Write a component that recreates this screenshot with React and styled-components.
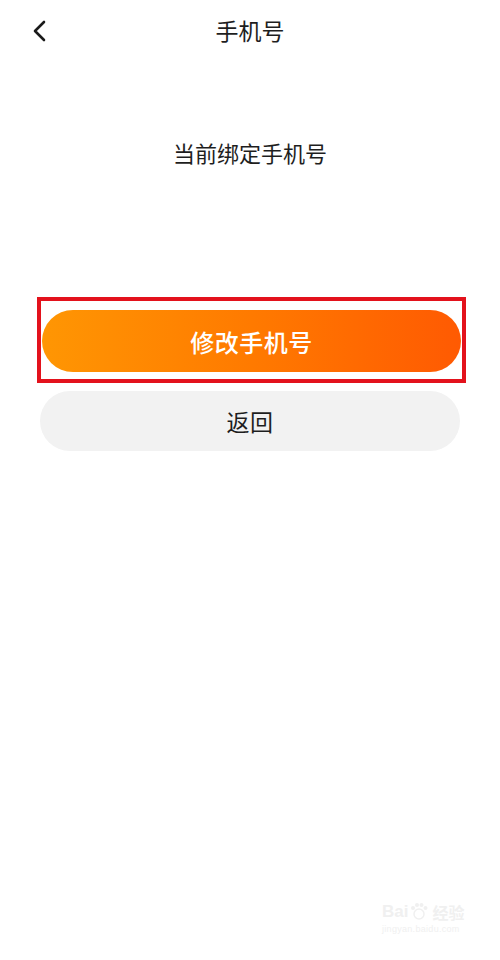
import React from 'react';
import styled, { createGlobalStyle } from 'styled-components';

const Global = createGlobalStyle`
  html, body {
    margin: 0;
    padding: 0;
    background: #fff;
  }
  body {
    font-family: "Noto Sans CJK SC", "Noto Sans", sans-serif;
    color: #1a1a1a;
  }
`

const Page = styled.div`
  position: relative;
  width: 500px;
  height: 960px;
  background: #fff;
  overflow: hidden;
`

const Header = styled.div`
  // 상단바
  position: relative;
  display: flex;
  align-items: center;
  justify-content: center;
  height: 60px;
  padding-bottom: 2px;
`

const Back = styled.div`
  position: absolute;
  left: 31px;
  top: 20px;
  width: 18px;
  height: 22px;
  display: flex;
  align-items: center;
  justify-content: center;
`

const Title = styled.div`
  font-size: 23px;
  line-height: 1;
  color: #1e1e1e;
`

const Subtitle = styled.div`
  margin-top: 77px;
  text-align: center;
  font-size: 22px;
  line-height: 26px;
  color: #1e1e1e;
`

const Highlight = styled.div`
  // 빨간 표시 박스
  margin: 132px 34px 0 37px;
  padding: 9px 1px 7px 1px;
  border: 4px solid #e3121c;
`

const Button = styled.div`
  display: flex;
  align-items: center;
  justify-content: center;
  height: ${props => props.h || 60}px;
  border-radius: 31px;
  font-size: ${props => props.primary ? 24 : 23}px;
  letter-spacing: 0.5px;
  background: ${props => props.primary
    ? 'linear-gradient(90deg, #ff9603 0%, #ff7a00 50%, #ff5a02 100%)'
    : '#f2f2f2'};
  color: ${props => props.primary ? '#fff' : '#1e1e1e'};
  font-weight: ${props => props.primary ? 500 : 400};
`

const Secondary = styled(Button)`
  margin: 8px 40px 0 40px;
`

const Watermark = styled.div`
  // 워터마크
  position: absolute;
  left: 382px;
  top: 902px;
  color: #f0f0f0;
  font-family: "Liberation Sans", sans-serif;
`

const MarkRow = styled.div`
  display: flex;
  align-items: flex-end;
  gap: 2px;
  font-size: 17px;
  font-weight: 700;
  line-height: 1;
`

const MarkCn = styled.span`
  font-family: "Noto Sans CJK SC", sans-serif;
  font-size: 16px;
  margin-left: 2px;
`

const MarkUrl = styled.div`
  margin-top: 4px;
  font-size: 9px;
  letter-spacing: 0.3px;
`

function App() {
  return (
    <Page>
      <Global />
      <Header>
        <Back>
          <svg width="18" height="22" viewBox="0 0 18 22">
            <polyline points="13,2 4,11 13,20" fill="none" stroke="#1a1a1a" strokeWidth="2.6" strokeLinecap="round" strokeLinejoin="round" />
          </svg>
        </Back>
        <Title>手机号</Title>
      </Header>
      <Subtitle>当前绑定手机号</Subtitle>
      <Highlight>
        <Button primary h={62}>修改手机号</Button>
      </Highlight>
      <Secondary>返回</Secondary>
      <Watermark>
        <MarkRow>
          <span>Bai</span>
          <svg width="18" height="18" viewBox="0 0 18 18">
            <circle cx="9" cy="12" r="5" fill="none" stroke="#f0f0f0" strokeWidth="1.5" />
            <circle cx="3" cy="6" r="2" fill="#f0f0f0" />
            <circle cx="7" cy="3" r="2" fill="#f0f0f0" />
            <circle cx="11.5" cy="3" r="2" fill="#f0f0f0" />
            <circle cx="15.5" cy="6" r="2" fill="#f0f0f0" />
          </svg>
          <MarkCn>经验</MarkCn>
        </MarkRow>
        <MarkUrl>jingyan.baidu.com</MarkUrl>
      </Watermark>
    </Page>
  );
}

export default App;
